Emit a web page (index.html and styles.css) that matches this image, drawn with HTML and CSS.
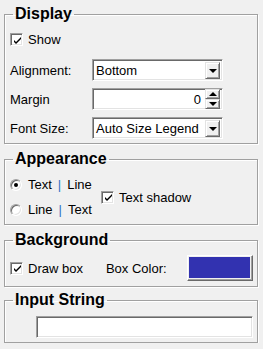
FILE: index.html
```html
<!DOCTYPE html>
<html lang="en">

<head>
    <meta charset="UTF-8" />
    <title>Legend Properties</title>
    <link rel="stylesheet" href="styles.css">
</head>

<body>
    <div class="panel">
        <!-- Display -->
        <fieldset class="group group-display">
            <legend>Display</legend>
            <label class="check check-show"><span class="box"><svg width="9" height="9" viewBox="0 0 9 9"><path d="M1 4 L3 6 L8 1 L8 3 L3 8 L1 6 Z" fill="#000"/></svg></span>Show</label>
            <div class="field-row">
                <span class="field-label">Alignment:</span>
                <div class="combo">
                    <span class="combo-text">Bottom</span>
                    <span class="btn drop-btn"><span class="arrow-down"></span></span>
                </div>
            </div>
            <div class="field-row">
                <span class="field-label">Margin</span>
                <div class="combo spin">
                    <span class="spin-value">0</span>
                    <span class="spin-btns">
                        <span class="btn spin-btn"><span class="arrow-up"></span></span>
                        <span class="btn spin-btn"><span class="arrow-down small"></span></span>
                    </span>
                </div>
            </div>
            <div class="field-row">
                <span class="field-label">Font Size:</span>
                <div class="combo">
                    <span class="combo-text">Auto Size Legend</span>
                    <span class="btn drop-btn"><span class="arrow-down"></span></span>
                </div>
            </div>
        </fieldset>

        <!-- Appearance -->
        <fieldset class="group group-appearance">
            <legend>Appearance</legend>
            <div class="radios">
                <label class="radio"><span class="dot on"></span>Text <span class="pipe">|</span> Line</label>
                <label class="radio"><span class="dot"></span>Line <span class="pipe">|</span> Text</label>
            </div>
            <label class="check"><span class="box"><svg width="9" height="9" viewBox="0 0 9 9"><path d="M1 4 L3 6 L8 1 L8 3 L3 8 L1 6 Z" fill="#000"/></svg></span>Text shadow</label>
        </fieldset>

        <!-- Background -->
        <fieldset class="group group-background">
            <legend>Background</legend>
            <label class="check"><span class="box"><svg width="9" height="9" viewBox="0 0 9 9"><path d="M1 4 L3 6 L8 1 L8 3 L3 8 L1 6 Z" fill="#000"/></svg></span>Draw box</label>
            <span class="color-label">Box Color:</span>
            <span class="color-btn"><span class="swatch"></span></span>
        </fieldset>

        <!-- Input String -->
        <fieldset class="group group-input">
            <legend>Input String</legend>
            <div class="text-input"></div>
        </fieldset>
    </div>
</body>

</html>
```

FILE: styles.css
```css
* {
    margin: 0;
    padding: 0;
    box-sizing: border-box;
}

body {
    font-family: "Liberation Sans", Arial, sans-serif;
    font-size: 13px;
    color: #000;
    background-color: #f0f0f0;
}

.panel {
    padding-top: 5px;
    display: flex;
    flex-direction: column;
}

.group {
    margin: 0 5px 0 4px;
    border: 1px solid #a0a0a0;
    box-shadow: 1px 1px 0 #fff, inset 1px 1px 0 #fff;
    padding: 0 4px 0 5px;
}

.group legend {
    font-size: 16px;
    font-weight: bold;
    line-height: 18px;
    margin-left: 3px;
    padding: 0 2px;
}

/* checkbox */
.check {
    display: flex;
    align-items: center;
    height: 15px;
    gap: 5px;
}

.box {
    width: 13px;
    height: 13px;
    background-color: #fff;
    border: 1px solid;
    border-color: #a0a0a0 #fff #fff #a0a0a0;
    box-shadow: inset 1px 1px 0 #696969, inset -1px -1px 0 #e3e3e3;
    display: flex;
    align-items: center;
    justify-content: center;
    padding: 1px 0 0 1px;
}

.box svg {
    display: block;
}

.check-show {
    margin-top: 9px;
}

/* label + control rows */
.field-row {
    display: flex;
    align-items: center;
    margin-top: 7px;
}

.check-show + .field-row {
    margin-top: 12px;
}

.field-row:last-child {
    margin-bottom: 4px;
}

.field-label {
    width: 82px;
}

.combo {
    width: 131px;
    height: 22px;
    background-color: #fff;
    border: 1px solid;
    border-color: #a0a0a0 #fff #fff #a0a0a0;
    box-shadow: inset 1px 1px 0 #696969, inset -1px -1px 0 #e3e3e3;
    display: flex;
    align-items: center;
    padding: 1px 2px 1px 3px;
}

.combo-text {
    flex: 1;
}

.btn {
    background-color: #f0f0f0;
    border: 1px solid;
    border-color: #e3e3e3 #696969 #696969 #e3e3e3;
    box-shadow: inset 1px 1px 0 #fff, inset -1px -1px 0 #a0a0a0;
    display: flex;
    align-items: center;
    justify-content: center;
}

.drop-btn {
    width: 15px;
    height: 17px;
    padding-top: 1px;
}

.arrow-down {
    width: 0;
    height: 0;
    border-left: 4px solid transparent;
    border-right: 4px solid transparent;
    border-top: 4px solid #000;
}

.arrow-up {
    width: 0;
    height: 0;
    border-left: 4px solid transparent;
    border-right: 4px solid transparent;
    border-bottom: 4px solid #000;
}

.spin-value {
    flex: 1;
    text-align: right;
    padding-right: 4px;
}

.spin-btns {
    display: flex;
    flex-direction: column;
    align-self: stretch;
    margin: -1px 0;
}

.spin-btn {
    width: 15px;
    height: 10px;
}

/* appearance */
.group-appearance {
    margin-top: 6px;
    display: flex;
    align-items: center;
    padding-top: 9px;
    padding-bottom: 7px;
}

.radios {
    display: flex;
    flex-direction: column;
    gap: 10px;
    width: 91px;
}

.radio {
    display: flex;
    align-items: center;
    height: 15px;
    gap: 6px;
}

.dot {
    width: 12px;
    height: 12px;
    border-radius: 50%;
    background-color: #fff;
    border: 1px solid;
    border-color: #a0a0a0 #fff #fff #a0a0a0;
    box-shadow: inset 1px 1px 0 #696969, inset -1px -1px 0 #e3e3e3;
    display: flex;
    align-items: center;
    justify-content: center;
}

.dot.on::after {
    content: "";
    width: 4px;
    height: 4px;
    border-radius: 50%;
    background-color: #000;
}

.pipe {
    color: #2f72c4;
}

/* background */
.group-background {
    margin-top: 6px;
    display: flex;
    align-items: center;
    padding-top: 6px;
    padding-bottom: 5px;
}

.color-label {
    margin-left: 23px;
    flex: 1;
}

.color-btn {
    width: 66px;
    height: 26px;
    border: 1px solid;
    border-color: #fff #696969 #696969 #fff;
    box-shadow: inset -1px -1px 0 #a0a0a0;
    padding: 1px 2px 2px 1px;
}

.swatch {
    display: block;
    height: 100%;
    background-color: #3232b0;
}

/* input string */
.group-input {
    margin-top: 4px;
    padding-top: 7px;
    padding-bottom: 4px;
}

.text-input {
    margin-left: 26px;
    height: 22px;
    background-color: #fff;
    border: 1px solid;
    border-color: #a0a0a0 #fff #fff #a0a0a0;
    box-shadow: inset 1px 1px 0 #696969, inset -1px -1px 0 #e3e3e3;
}
```
